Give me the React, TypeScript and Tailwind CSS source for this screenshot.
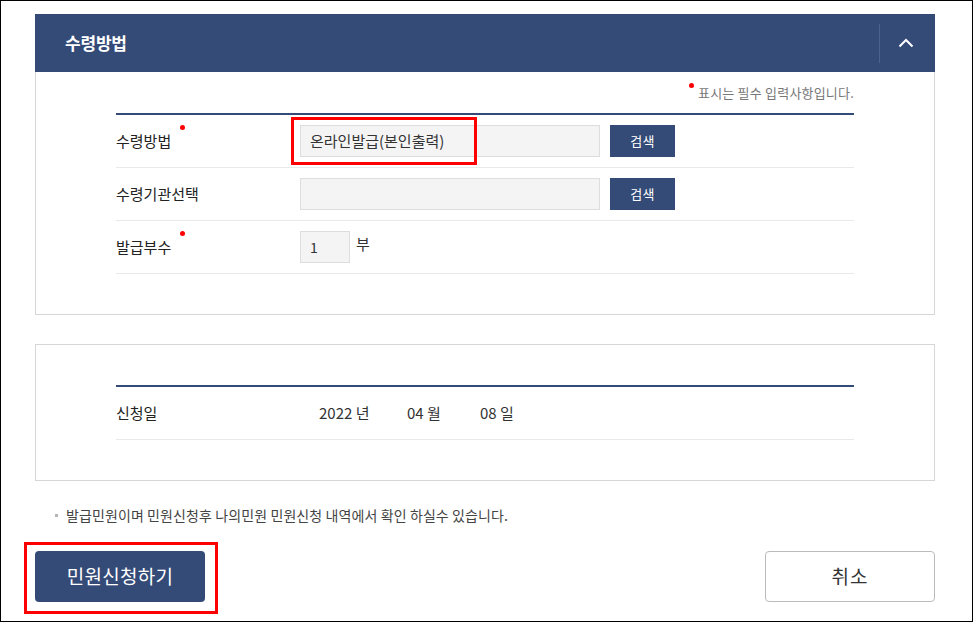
import React from "react";

const NAVY = "bg-[#344b77]";

function Dot() {
  return <span className="inline-block w-[5px] h-[5px] rounded-full bg-[#ff0000]" />;
}

function Label({ text, required }: { text: string; required?: boolean }) {
  return (
    <div className="w-[184px] shrink-0 flex items-center">
      <span className="text-[15px] text-[#222]">{text}</span>
      {required && (
        <span className="ml-[9px] -mt-[28px] flex">
          <Dot />
        </span>
      )}
    </div>
  );
}

function SearchButton() {
  return (
    <button className="ml-[10px] w-[65px] h-[32px] bg-[#344b77] text-white text-[13px] tracking-[0.3px] flex items-center justify-center">
      검색
    </button>
  );
}

export default function App() {
  return (
    <div
      className="w-[973px] h-[622px] border border-black bg-white overflow-hidden text-[#222]"
      style={{ fontFamily: '"Noto Sans CJK KR", "Noto Sans", sans-serif' }}
    >
      <div className="pl-[34px] pt-[13px] w-[934px]">
        {/* Panel 1 */}
        <div className={`${NAVY} h-[58px] flex items-center`}>
          <div className="flex-1 pl-[30px] text-white font-bold text-[17px] tracking-[-0.2px]">수령방법</div>
          <div className="w-px h-[39px] bg-[#4c6190]" />
          <div className="w-[55px] h-full flex items-center justify-center pr-[3px]">
            <svg width="16" height="10" viewBox="0 0 16 10" fill="none">
              <polyline points="1.5,8.5 8,2 14.5,8.5" stroke="white" strokeWidth="2" />
            </svg>
          </div>
        </div>
        <div className="border-x border-b border-[#d6d6d6] px-[80px] pb-[40px]">
          <div className="h-[41px] flex items-center justify-end">
            <span className="-mt-[14px] mr-[4px] flex">
              <Dot />
            </span>
            <span className="text-[13px] text-[#777] tracking-[0.2px]">표시는 필수 입력사항입니다.</span>
          </div>
          <div className="border-t-2 border-[#344b77]">
            <div className="h-[53px] border-b border-[#e9e9e9] flex items-center">
              <Label text="수령방법" required />
              <div className="relative flex items-center">
                <div className="w-[300px] h-[32px] bg-[#f4f4f4] border border-[#dddddd] flex items-center pl-[9px] text-[15px] text-[#333]">
                  온라인발급(본인출력)
                </div>
                <SearchButton />
                <div className="absolute left-[-9px] top-[-8px] w-[186px] h-[48px] border-[3px] border-[#ff0000]" />
              </div>
            </div>
            <div className="h-[53px] border-b border-[#e9e9e9] flex items-center">
              <Label text="수령기관선택" />
              <div className="w-[300px] h-[32px] bg-[#f4f4f4] border border-[#dddddd]" />
              <SearchButton />
            </div>
            <div className="h-[53px] border-b border-[#e9e9e9] flex items-center">
              <Label text="발급부수" required />
              <div className="w-[50px] h-[32px] bg-[#f4f4f4] border border-[#dddddd] flex items-center pl-[9px] text-[14px] text-[#333]">
                1
              </div>
              <span className="ml-[6px] -mt-[6px] text-[15px] text-[#333]">부</span>
            </div>
          </div>
        </div>

        {/* Panel 2 */}
        <div className="mt-[29px] border border-[#d6d6d6] px-[80px] pt-[40px] pb-[40px]">
          <div className="border-t-2 border-[#344b77]">
            <div className="h-[53px] border-b border-[#e9e9e9] flex items-center">
              <Label text="신청일" />
              <div className="flex items-center pl-[19px] text-[15px] text-[#333]">
                <span className="w-[88px]">2022 년</span>
                <span className="w-[73px]">04 월</span>
                <span>08 일</span>
              </div>
            </div>
          </div>
        </div>

        {/* Note */}
        <div className="mt-[24px] h-[20px] flex items-center pl-[20px] text-[14px] text-[#444] tracking-[0.1px]">
          <span className="w-[3px] h-[3px] bg-[#b5b5b5] mr-[8px]" />
          발급민원이며 민원신청후 나의민원 민원신청 내역에서 확인 하실수 있습니다.
        </div>

        {/* Buttons */}
        <div className="mt-[26px] flex justify-between">
          <div className="relative">
            <button className="w-[170px] h-[51px] rounded-[4px] bg-[#344b77] text-white text-[19px] tracking-[0.3px] flex items-center justify-center">
              민원신청하기
            </button>
            <div className="absolute left-[-11px] top-[-9px] w-[194px] h-[72px] border-[3px] border-[#ff0000]" />
          </div>
          <button className="w-[170px] h-[51px] rounded-[4px] border border-[#bbbbbb] bg-white text-[#333] text-[19px] tracking-[1px] flex items-center justify-center">
            취소
          </button>
        </div>
      </div>
    </div>
  );
}
